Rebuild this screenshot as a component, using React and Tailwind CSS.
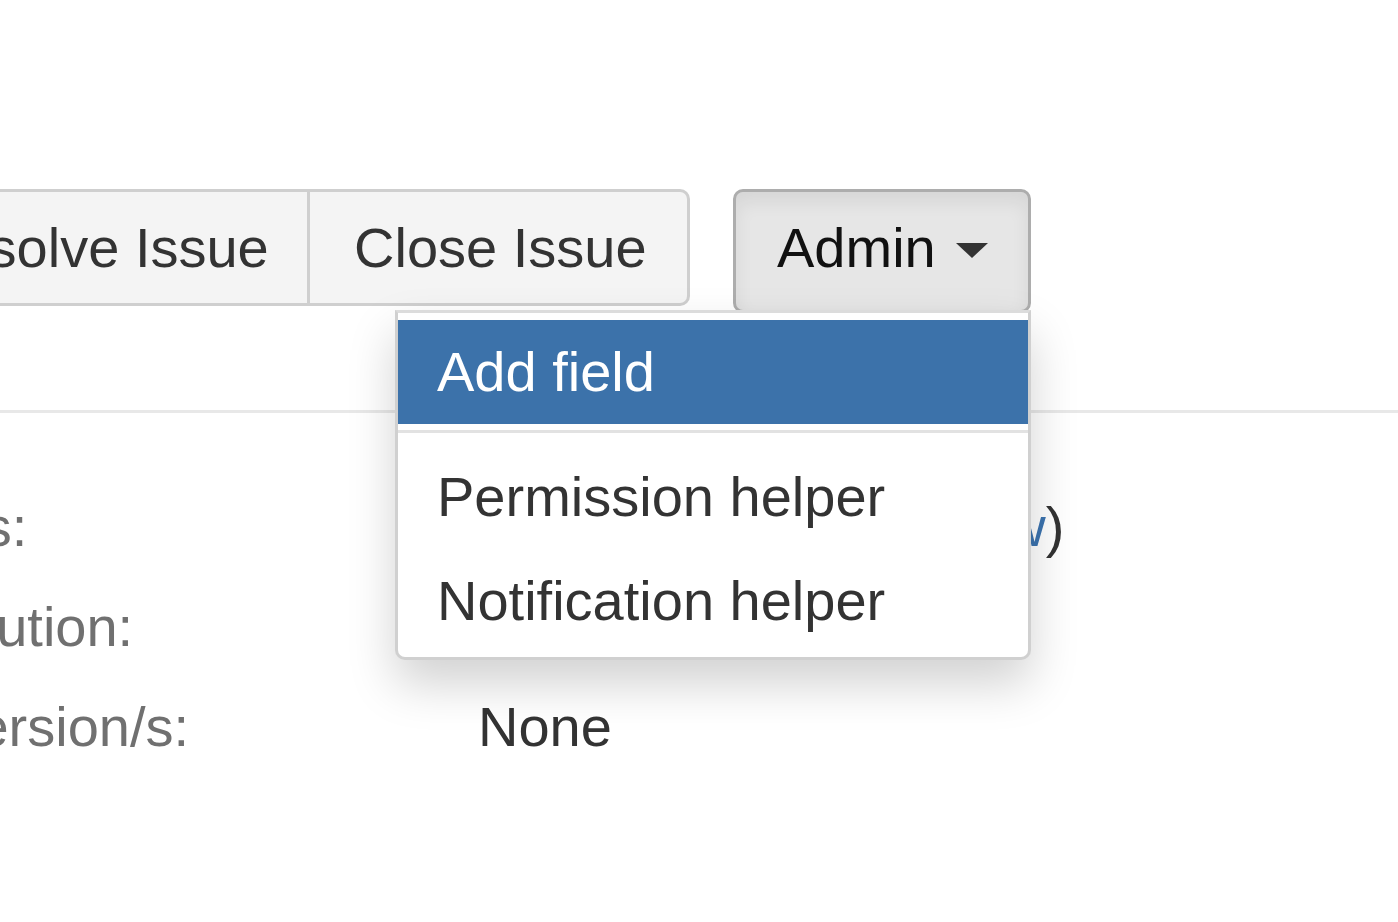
import React from 'react';

const rows = [
  { label: 'Status:', kind: 'status' },
  { label: 'Resolution:', value: 'Unresolved' },
  { label: 'Fix Version/s:', value: 'None' },
];

const menuItems = [
  { label: 'Add field', active: true },
  { divider: true },
  { label: 'Permission helper' },
  { label: 'Notification helper' },
];

const App = () => {
  return (
    <div className="min-h-screen w-full overflow-hidden bg-white font-['Liberation_Sans',Arial,sans-serif] text-[56px] text-[#333]">
      {/* Toolbar */}
      <div className="flex items-start pt-[189px] ml-[-133px]">
        <div className="flex">
          <button className="h-[117px] w-[443px] pl-[47px] text-left leading-none bg-[#f4f4f4] border-[3px] border-[#cfcfcf] rounded-l-[10px] text-[#333]">
            Resolve Issue
          </button>
          <button className="h-[117px] w-[380px] pl-[44px] text-left leading-none bg-[#f4f4f4] border-[3px] border-l-0 border-[#cfcfcf] rounded-r-[10px] text-[#333]">
            Close Issue
          </button>
        </div>

        <div className="relative ml-[43px]">
          <button className="flex items-center h-[124px] pb-[6px] w-[298px] pl-[41px] leading-none bg-[#e6e6e6] border-[3px] border-[#adadad] rounded-[10px] shadow-[inset_0_10px_18px_rgba(0,0,0,0.07)] text-[#111]">
            Admin
            <span className="ml-[20px] mt-[4px] w-0 h-0 border-l-[16px] border-r-[16px] border-t-[15px] border-l-transparent border-r-transparent border-t-[#333]"></span>
          </button>

          {/* Dropdown */}
          <div className="absolute right-0 top-[121px] z-10 w-[636px] bg-white border-[3px] border-[#d0d0d0] border-t-[#dcdcdc] rounded-b-[10px] pt-[7px] pb-[4px] shadow-[0_24px_48px_rgba(0,0,0,0.18)]">
            {menuItems.map((item, i) =>
              item.divider ? (
                <div key={i} className="mt-[6px] mb-[12px] h-[3px] bg-[#e2e2e2]" />
              ) : (
                <div
                  key={i}
                  className={`h-[104px] flex items-center pl-[39px] leading-none ${item.active ? 'bg-[#3c72aa] text-white' : 'text-[#333]'}`}
                >
                  {item.label}
                </div>
              )
            )}
          </div>
        </div>
      </div>

      <div className="mt-[97px] h-[3px] bg-[#e8e8e8]" />

      {/* Details */}
      <div className="mt-[64px]">
        {rows.map((row) => (
          <div key={row.label} className="flex items-center h-[100px] ml-[-147px] leading-none">
            <div className="w-[625px] shrink-0 text-[#707070]">{row.label}</div>
            {row.kind === 'status' ? (
              <div className="flex items-center whitespace-nowrap">
                <span>Open</span>
                <span className="ml-[47px]">
                  (<span className="text-[#3b73af]">View Workflow</span>)
                </span>
              </div>
            ) : (
              <div className="text-[#333]">{row.value}</div>
            )}
          </div>
        ))}
      </div>
    </div>
  );
};

export default App;
